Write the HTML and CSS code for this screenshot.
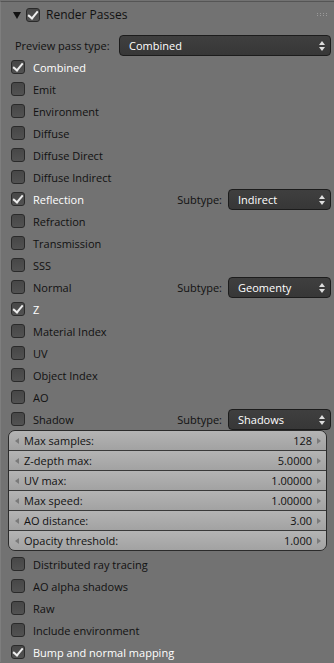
FILE: index.html
```html
<!doctype html>
<html lang="en">
  <head>
    <meta charset="UTF-8" />
    <meta name="viewport" content="width=device-width, initial-scale=1.0" />
    <title>Render Passes</title>
    <link rel="stylesheet" href="styles.css">
  </head>
  <body>
    <div class="panel">
      <div class="header">
        <svg class="tri" width="8" height="8" viewBox="0 0 8 8"><polygon points="0,1 8,1 4,8" fill="#111" /></svg>
        <span class="check on"></span>
        <span class="title">Render Passes</span>
        <svg class="grip" width="11" height="4" viewBox="0 0 11 4">
          <g fill="#9a9a9a">
            <rect x="0" y="0" width="1" height="1" /><rect x="3" y="0" width="1" height="1" />
            <rect x="6" y="0" width="1" height="1" /><rect x="9" y="0" width="1" height="1" />
            <rect x="0" y="2" width="1" height="1" /><rect x="3" y="2" width="1" height="1" />
            <rect x="6" y="2" width="1" height="1" /><rect x="9" y="2" width="1" height="1" />
          </g>
        </svg>
      </div>

      <div class="preview">
        <span class="label">Preview pass type:</span>
        <div class="menu wide">Combined<span class="updown"></span></div>
      </div>

      <div class="row"><span class="check on"></span><span class="name on">Combined</span></div>
      <div class="row"><span class="check"></span><span class="name">Emit</span></div>
      <div class="row"><span class="check"></span><span class="name">Environment</span></div>
      <div class="row"><span class="check"></span><span class="name">Diffuse</span></div>
      <div class="row"><span class="check"></span><span class="name">Diffuse Direct</span></div>
      <div class="row"><span class="check"></span><span class="name">Diffuse Indirect</span></div>
      <div class="row">
        <span class="check on"></span><span class="name on">Reflection</span>
        <span class="sub">Subtype:</span>
        <div class="menu">Indirect<span class="updown"></span></div>
      </div>
      <div class="row"><span class="check"></span><span class="name">Refraction</span></div>
      <div class="row"><span class="check"></span><span class="name">Transmission</span></div>
      <div class="row"><span class="check"></span><span class="name">SSS</span></div>
      <div class="row">
        <span class="check"></span><span class="name">Normal</span>
        <span class="sub">Subtype:</span>
        <div class="menu">Geomenty<span class="updown"></span></div>
      </div>
      <div class="row"><span class="check on"></span><span class="name on">Z</span></div>
      <div class="row"><span class="check"></span><span class="name">Material Index</span></div>
      <div class="row"><span class="check"></span><span class="name">UV</span></div>
      <div class="row"><span class="check"></span><span class="name">Object Index</span></div>
      <div class="row"><span class="check"></span><span class="name">AO</span></div>
      <div class="row">
        <span class="check"></span><span class="name">Shadow</span>
        <span class="sub">Subtype:</span>
        <div class="menu">Shadows<span class="updown"></span></div>
      </div>

      <div class="numbers">
        <div class="num"><span class="arrow left"></span><span class="key">Max samples:</span><span class="val">128</span><span class="arrow right"></span></div>
        <div class="num"><span class="arrow left"></span><span class="key">Z-depth max:</span><span class="val">5.0000</span><span class="arrow right"></span></div>
        <div class="num"><span class="arrow left"></span><span class="key">UV max:</span><span class="val">1.00000</span><span class="arrow right"></span></div>
        <div class="num"><span class="arrow left"></span><span class="key">Max speed:</span><span class="val">1.00000</span><span class="arrow right"></span></div>
        <div class="num"><span class="arrow left"></span><span class="key">AO distance:</span><span class="val">3.00</span><span class="arrow right"></span></div>
        <div class="num"><span class="arrow left"></span><span class="key">Opacity threshold:</span><span class="val">1.000</span><span class="arrow right"></span></div>
      </div>

      <div class="extra">
        <div class="row"><span class="check"></span><span class="name">Distributed ray tracing</span></div>
        <div class="row"><span class="check"></span><span class="name">AO alpha shadows</span></div>
        <div class="row"><span class="check"></span><span class="name">Raw</span></div>
        <div class="row"><span class="check"></span><span class="name">Include environment</span></div>
        <div class="row"><span class="check on"></span><span class="name on">Bump and normal mapping</span></div>
      </div>
    </div>
  </body>
</html>
```

FILE: styles.css
```css
/* Blender-like properties panel */
body {
  margin: 0;
  background-color: #727272;
  font-family: "Open Sans", "DejaVu Sans", sans-serif;
  font-size: 11px;
  color: #111;
}

.panel {
  margin-top: 1px;
  border-top: 1px solid #555;
  border-left: 1px solid #7e7e7e;
  height: 661px;
  box-sizing: border-box;
  overflow: hidden;
}

.header {
  display: flex;
  align-items: center;
  height: 25px;
  padding-left: 12px;
}

.tri {
  margin-right: 5px;
}

.title {
  margin-left: 6px;
  font-size: 12px;
  color: #111;
}

.grip {
  margin-left: auto;
  margin-right: 6px;
}

/* checkboxes */
.check {
  position: relative;
  flex: none;
  width: 12px;
  height: 12px;
  background: linear-gradient(#474747, #525252);
  border: 1px solid #2a2a2a;
  border-radius: 3px;
}

.check.on::after {
  content: "";
  position: absolute;
  left: 3px;
  top: 0;
  width: 4px;
  height: 8px;
  border-right: 2px solid #eee;
  border-bottom: 2px solid #eee;
  transform: rotate(40deg);
}

.preview {
  display: flex;
  align-items: center;
  height: 22px;
  margin-top: 7px;
  padding-left: 14px;
}

.preview .label {
  width: 104px;
}

.row {
  display: flex;
  align-items: center;
  height: 22px;
  padding-left: 10px;
}

.name {
  margin-left: 8px;
  color: #111;
}

.name.on {
  color: #fff;
}

.sub {
  margin-left: auto;
  margin-right: 6px;
}

/* dropdown menus */
.menu {
  position: relative;
  box-sizing: border-box;
  width: 103px;
  height: 21px;
  line-height: 19px;
  margin-right: 3px;
  padding-left: 9px;
  color: #fff;
  background: linear-gradient(#3f3f3f, #373737);
  border: 1px solid #1c1c1c;
  border-radius: 4px;
}

.menu.wide {
  width: 212px;
}

.updown {
  position: absolute;
  right: 5px;
  top: 5px;
  width: 0;
  height: 0;
  border-left: 3px solid transparent;
  border-right: 3px solid transparent;
  border-bottom: 4px solid #ddd;
}

.updown::after {
  content: "";
  position: absolute;
  left: -3px;
  top: 6px;
  border-left: 3px solid transparent;
  border-right: 3px solid transparent;
  border-top: 4px solid #ddd;
}

/* number fields */
.numbers {
  margin: 0 7px 0 7px;
  border: 1px solid #2b2b2b;
  border-radius: 7px;
  overflow: hidden;
}

.num {
  display: flex;
  align-items: center;
  height: 19px;
  padding: 0 5px 0 6px;
  background: linear-gradient(#b4b4b4, #a2a2a2);
  border-top: 1px solid #3a3a3a;
}

.num:first-child {
  border-top: none;
}

.key {
  margin-left: 5px;
}

.val {
  margin-left: auto;
  margin-right: 5px;
}

.arrow {
  width: 0;
  height: 0;
  border-top: 3px solid transparent;
  border-bottom: 3px solid transparent;
}

.arrow.left {
  border-right: 4px solid #7a7a7a;
}

.arrow.right {
  border-left: 4px solid #7a7a7a;
}

.extra {
  margin-top: 2px;
}
```
